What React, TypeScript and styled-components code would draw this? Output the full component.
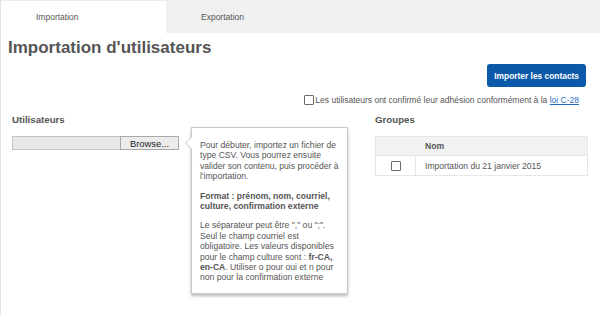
import React from "react";
import styled, { createGlobalStyle } from "styled-components";

const Global = createGlobalStyle`
  html, body { margin: 0; padding: 0; background: #fff; }
  body { font-family: "Liberation Sans", Arial, sans-serif; color: #555; }
`;

const Page = styled.div`
  width: 600px;
  height: 315px;
  box-sizing: border-box;
  border-left: 1px solid #e2e2e2;
  border-top: 1px solid #ececec;
  overflow: hidden;
  position: relative;
`;

const Tabs = styled.div`
  display: flex;
  height: 32px;
`;

const Tab = styled.div<{ $active?: boolean }>`
  flex: ${(p) => (p.$active ? "0 0 165px" : "1")};
  background: ${(p) => (p.$active ? "#fff" : "#f0f0f0")};
  padding-left: 35px;
  box-sizing: border-box;
  display: flex;
  align-items: center;
  font-size: 8.5px;
  color: #555;
`;

const Content = styled.div`
  padding: 0 14px 0 7px;
`;

const Title = styled.h1`
  margin: 5px 0 0;
  font-size: 17px;
  line-height: 20px;
  font-weight: bold;
  color: #555;
`;

const Actions = styled.div`
  display: flex;
  justify-content: flex-end;
  margin-top: 6px;
`;

const PrimaryButton = styled.button`
  font-family: inherit;
  background: #0b5aa9;
  color: #fff;
  border: none;
  border-radius: 3px;
  height: 23px;
  padding: 0 7px;
  font-size: 8.4px;
  font-weight: bold;
`;

const ConsentRow = styled.label`
  display: flex;
  justify-content: flex-end;
  align-items: center;
  gap: 1px;
  margin-top: 7px;
  padding-right: 7px;
  font-size: 8.5px;
  line-height: 12px;
  color: #555;
`;

const Box = styled.span`
  display: inline-block;
  box-sizing: border-box;
  width: 10px;
  height: 10px;
  border: 1px solid #6a6a6a;
  border-radius: 1px;
  background: #fff;
`;

const Link = styled.a`
  color: #2a6bbd;
  text-decoration: underline;
`;

const Columns = styled.div`
  display: grid;
  grid-template-columns: 363px 1fr;
  padding-left: 4px;
  margin-top: 8px;
`;

const Column = styled.div`
  position: relative;
`;

const SectionTitle = styled.h2`
  margin: 0;
  font-size: 9.7px;
  line-height: 12px;
  font-weight: bold;
  color: #555;
`;

const FileInput = styled.div`
  display: flex;
  width: 167px;
  height: 14px;
  margin-top: 10px;
`;

const FileField = styled.div`
  flex: 0 0 108px;
  box-sizing: border-box;
  background: #e7e7e7;
  border: 1px solid #c4c4c4;
  border-right: none;
`;

const BrowseButton = styled.div`
  flex: 1;
  box-sizing: border-box;
  background: #ececec;
  border: 1px solid #a9a9a9;
  font-size: 9.4px;
  color: #222;
  display: flex;
  align-items: center;
  justify-content: center;
`;

const Popover = styled.div`
  position: absolute;
  left: 179px;
  top: 13px;
  width: 157px;
  box-sizing: border-box;
  background: #fff;
  border: 1px solid #c9c9c9;
  box-shadow: 0 2px 3px rgba(0, 0, 0, 0.28);
  padding: 12px 8px 10px 8px;
  font-size: 8.6px;
  line-height: 10.4px;
  color: #555;

  &::before,
  &::after {
    content: "";
    position: absolute;
    border-style: solid;
    border-color: transparent;
  }
  &::before {
    left: -7px;
    top: 8px;
    border-width: 7px 7px 7px 0;
    border-right-color: #c9c9c9;
  }
  &::after {
    left: -6px;
    top: 8px;
    border-width: 7px 7px 7px 0;
    border-right-color: #fff;
  }
`;

const Para = styled.p`
  margin: 0 0 9px;
  &:last-child { margin-bottom: 0; }
`;

const Table = styled.div`
  margin-top: 10px;
  width: 211px;
  border: 1px solid #e6e6e6;
`;

const HeadRow = styled.div`
  display: grid;
  grid-template-columns: 40px 1fr;
  height: 18px;
  align-items: center;
  background: #f2f2f2;
  font-weight: bold;
  font-size: 8.6px;
`;

const BodyRow = styled.div`
  display: grid;
  grid-template-columns: 40px 1fr;
  height: 19px;
  font-size: 8.6px;
  border-top: 1px solid #e6e6e6;
`;

const Cell = styled.div<{ $check?: boolean }>`
  display: flex;
  align-items: center;
  justify-content: ${(p) => (p.$check ? "center" : "flex-start")};
  padding-left: ${(p) => (p.$check ? "0" : "9px")};
  border-right: ${(p) => (p.$check ? "1px solid #e6e6e6" : "none")};
`;

const HeadCell = styled.div`
  padding-left: 9px;
`;

export default function App() {
  return (
    <>
      <Global />
      <Page>
        <Tabs>
          <Tab $active>Importation</Tab>
          <Tab>Exportation</Tab>
        </Tabs>
        <Content>
          <Title>Importation d'utilisateurs</Title>
          <Actions>
            <PrimaryButton>Importer les contacts</PrimaryButton>
          </Actions>
          <ConsentRow>
            <Box />
            <span>
              Les utilisateurs ont confirmé leur adhésion conformément à la{" "}
              <Link href="#">loi C-28</Link>
            </span>
          </ConsentRow>
          <Columns>
            <Column>
              <SectionTitle>Utilisateurs</SectionTitle>
              <FileInput>
                <FileField />
                <BrowseButton>Browse...</BrowseButton>
              </FileInput>
              <Popover>
                <Para>
                  Pour débuter, importez un fichier de
                  <br />
                  type CSV. Vous pourrez ensuite
                  <br />
                  valider son contenu, puis procéder à
                  <br />
                  l'importation.
                </Para>
                <Para>
                  <b>
                    Format : prénom, nom, courriel,
                    <br />
                    culture, confirmation externe
                  </b>
                </Para>
                <Para>
                  Le séparateur peut être "," ou ";".
                  <br />
                  Seul le champ courriel est
                  <br />
                  obligatoire. Les valeurs disponibles
                  <br />
                  pour le champ culture sont : <b>fr-CA,</b>
                  <br />
                  <b>en-CA</b>. Utiliser o pour oui et n pour
                  <br />
                  non pour la confirmation externe
                </Para>
              </Popover>
            </Column>
            <Column>
              <SectionTitle>Groupes</SectionTitle>
              <Table>
                <HeadRow>
                  <div />
                  <HeadCell>Nom</HeadCell>
                </HeadRow>
                <BodyRow>
                  <Cell $check>
                    <Box />
                  </Cell>
                  <Cell>Importation du 21 janvier 2015</Cell>
                </BodyRow>
              </Table>
            </Column>
          </Columns>
        </Content>
      </Page>
    </>
  );
}
